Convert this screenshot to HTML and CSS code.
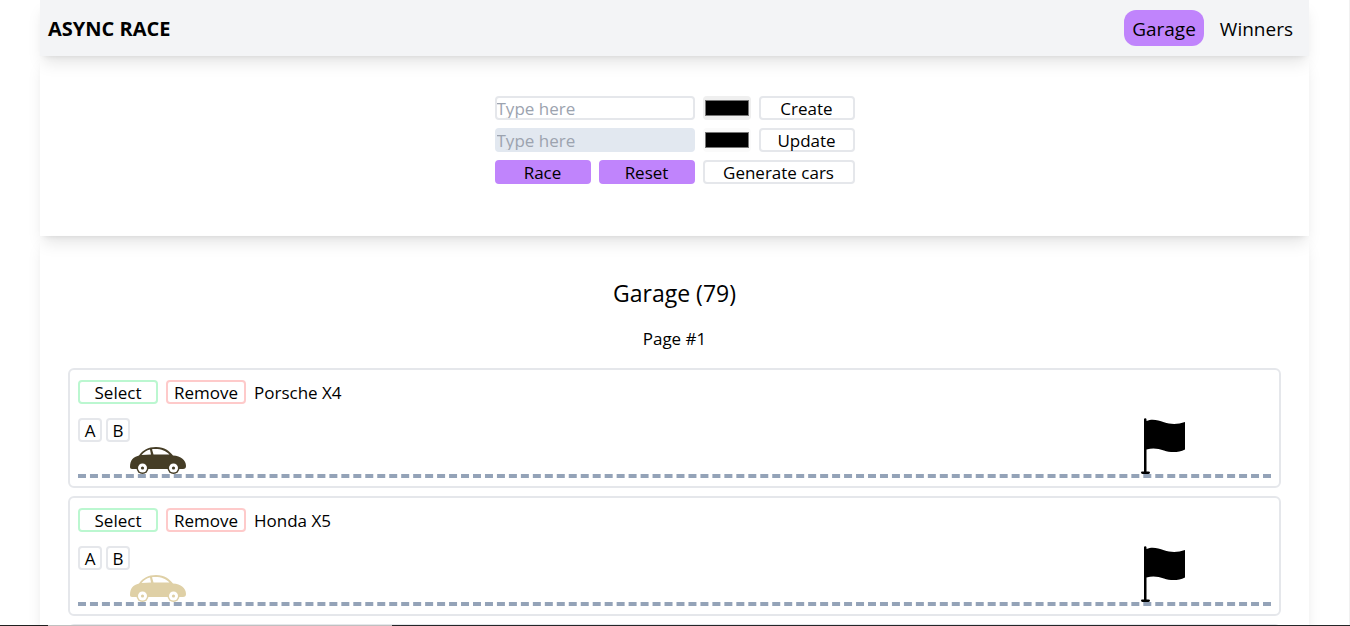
FILE: index.html
```html
<!DOCTYPE html>
<html lang="en">
<head>
<meta charset="utf-8">
<title>Async Race</title>
<link rel="stylesheet" href="styles.css">
</head>
<body>
<svg class="sprite" aria-hidden="true">
  <symbol id="car" viewBox="0 0 56 27">
    <path fill-rule="evenodd" d="M0 20C0 13 3 10 9 8.500C13 3 18 0 26 0C35 0 39 4 43 8.500C51 9 56 13 56 19C56 21 55 22 53 22H2C.7 22 0 21 0 20ZM11.500 8L21 7.500L20 2.600C16.500 3.300 14 5.300 11.500 8ZM22 2.200L23.500 7.500H39.500C35.500 3.700 31 1.600 22 2.200Z"/>
    <circle cx="12.500" cy="21" r="6"/>
    <circle cx="43.500" cy="21" r="6"/>
    <circle cx="12.500" cy="21" r="4.500" fill="#fff"/>
    <circle cx="43.500" cy="21" r="4.500" fill="#fff"/>
    <circle cx="12.500" cy="21" r="1.600"/>
    <circle cx="43.500" cy="21" r="1.600"/>
  </symbol>
  <symbol id="flag" viewBox="0 0 44 56">
    <path d="M3 1.500Q3 .3 4.200 .3T5.500 1.500V3C12 .5 17 2.500 23 4.300C30 6.600 37 6.500 44 4V31.500C37 35 29 34.500 23 32.500C17 30.500 12 29.500 5.500 31.500V53.500H7.500Q9 53.500 9 54.600T7.500 56H1.500Q0 56 0 54.600T1.500 53.500H3Z"/>
  </symbol>
</svg>
<div class="page">
  <header class="header">
    <h1 class="brand">ASYNC RACE</h1>
    <nav class="nav">
      <a class="nav-link nav-link-active" href="#garage">Garage</a>
      <a class="nav-link" href="#winners">Winners</a>
    </nav>
  </header>
  <section class="controls">
    <form class="panel">
      <input class="field wide" type="text" placeholder="Type here" aria-label="New car name">
      <input class="color" type="color" value="#000000" aria-label="New car color">
      <button class="button" type="button">Create</button>
      <input class="field wide" type="text" placeholder="Type here" aria-label="Updated car name" disabled>
      <input class="color" type="color" value="#000000" aria-label="Updated car color" disabled>
      <button class="button" type="button">Update</button>
      <button class="button primary" type="button">Race</button>
      <button class="button primary" type="button">Reset</button>
      <button class="button wide" type="button">Generate cars</button>
    </form>
  </section>
  <main class="garage" id="garage">
    <h2 class="title">Garage (79)</h2>
    <p class="page-number">Page #1</p>
    <ul class="cars">
      <li class="card">
        <div class="row">
          <button class="button select" type="button">Select</button>
          <button class="button remove" type="button">Remove</button>
          <span class="name">Porsche X4</span>
        </div>
        <div class="track">
          <div class="engine">
            <button class="button small" type="button">A</button>
            <button class="button small" type="button">B</button>
          </div>
          <svg class="car car-olive" role="img" aria-label="Car"><use href="#car"/></svg>
          <svg class="flag" role="img" aria-label="Finish"><use href="#flag"/></svg>
        </div>
      </li>
      <li class="card">
        <div class="row">
          <button class="button select" type="button">Select</button>
          <button class="button remove" type="button">Remove</button>
          <span class="name">Honda X5</span>
        </div>
        <div class="track">
          <div class="engine">
            <button class="button small" type="button">A</button>
            <button class="button small" type="button">B</button>
          </div>
          <svg class="car car-sand" role="img" aria-label="Car"><use href="#car"/></svg>
          <svg class="flag" role="img" aria-label="Finish"><use href="#flag"/></svg>
        </div>
      </li>
      <li class="card"></li>
    </ul>
  </main>
</div>
<div class="edge"></div>
</body>
</html>
```
FILE: styles.css
```css
* { box-sizing: border-box; margin: 0; padding: 0; }
body {
  height: 100vh;
  overflow: hidden;
  border-right: 1px solid #f1f1f1;
  font: 17px/24px "Segoe UI", "Open Sans", "Noto Sans", sans-serif;
  color: #000;
  background: #fff;
}
.sprite { display: none; }
.page { height: 100vh; margin: 0 40px; }
.header, .controls, .garage {
  box-shadow: 0 10px 15px -3px rgba(0, 0, 0, .1), 0 4px 6px -4px rgba(0, 0, 0, .1);
}
.header {
  display: flex;
  align-items: center;
  justify-content: space-between;
  height: 56px;
  padding: 0 8px;
  background: #f3f4f6;
  position: relative;
}
.brand { padding-top: 2px; font-size: 20px; line-height: 28px; font-weight: 700; }
.nav { display: flex; gap: 8px; font-size: 19px; line-height: 28px; }
.nav-link { padding: 5px 8px 3px; border-radius: 12px; color: inherit; text-decoration: none; }
.nav-link-active { background: #c084fc; }
.controls { display: flex; justify-content: center; padding: 40px 0 52px; }
.panel { display: grid; grid-template-columns: 96px 96px 48px 96px; gap: 8px; }
.wide { grid-column: span 2; }
.button, .field {
  height: 24px;
  border: 2px solid #e5e7eb;
  border-radius: 4px;
  background: #fff;
  font: inherit;
  line-height: 20px;
  color: inherit;
  min-width: 0;
}
.button { padding-top: 1px; line-height: 20px; }
.field::placeholder { color: #9ca3af; opacity: 1; }
.field:disabled { background: #e2e8f0; border-color: #e2e8f0; }
.primary { background: #c084fc; border-color: #c084fc; }
.color { width: 48px; height: 24px; border: 0; border-radius: 4px; background: #efefef; }
.color:disabled { background: #fafafa; }
.garage { padding: 41px 28px 40px; }
.title { text-align: center; font-size: 23px; line-height: 32px; font-weight: 400; margin-bottom: 16px; }
.page-number { text-align: center; line-height: 28px; margin-bottom: 15px; }
.cars { display: grid; gap: 8px; list-style: none; }
.card { height: 120px; border: 2px solid #e5e7eb; border-radius: 6px; padding: 10px 8px 8px; }
.row { display: flex; gap: 8px; height: 24px; }
.name { padding-top: 1px; }
.select, .remove { width: 80px; }
.select { border-color: #bbf7d0; }
.remove { border-color: #fecaca; }
.track {
  display: flex;
  align-items: flex-end;
  height: 62px;
  margin-top: 12px;
  border-bottom: 4px dashed #94a3b8;
}
.engine { display: flex; gap: 4px; align-self: flex-start; padding-top: 2px; }
.small { width: 24px; }
.car { width: 56px; height: 27px; }
.car-olive { fill: #453d26; }
.car-sand { fill: #dfd0a6; }
.flag { width: 44px; height: 56px; margin-left: auto; margin-right: 86px; }
.edge {
  position: fixed;
  inset: auto 0 0;
  height: 1px;
  background: linear-gradient(90deg, #202020 48px, #c0c0c0 48px 392px, #252628 392px);
}
```
